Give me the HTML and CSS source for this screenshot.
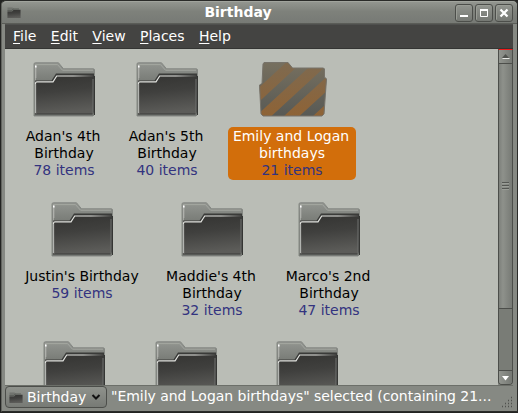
FILE: index.html
```html
<!DOCTYPE html>
<html lang="en">
<head>
<meta charset="utf-8">
<title>Birthday</title>
<link rel="stylesheet" href="styles.css">
</head>
<body>
<svg class="defs" width="0" height="0" aria-hidden="true">
  <defs>
    <linearGradient id="back" x1="0" y1="0" x2="0" y2="1"><stop offset="0" stop-color="#929590"/><stop offset=".5" stop-color="#6d706b"/></linearGradient>
    <linearGradient id="front" x1="0" y1="0" x2=".15" y2="1"><stop offset="0" stop-color="#343432"/><stop offset=".45" stop-color="#40403e"/><stop offset="1" stop-color="#5c5c59"/></linearGradient>
    <linearGradient id="shine" x1="0" y1="0" x2="1" y2="0"><stop offset="0" stop-color="#dedfdb"/><stop offset=".65" stop-color="#e6e7e3"/><stop offset="1" stop-color="#4a4a48"/></linearGradient>
    <linearGradient id="fade" x1="0" y1="0" x2="0" y2="1"><stop offset="0" stop-color="#77705f"/><stop offset="1" stop-color="#575955"/></linearGradient>
    <linearGradient id="stripe" gradientUnits="userSpaceOnUse" x1="0" y1="0" x2="0" y2="54"><stop offset="0" stop-color="#7e6a50"/><stop offset="1" stop-color="#8e6336"/></linearGradient>
    <clipPath id="open"><path d="M4 2 5 .5H29L33.500 6H64.500L65.500 7V15L67.500 17 65 52 63 54H4L2 52 .5 23 3 21.500Z"/></clipPath>
    <symbol id="folder" viewBox="0 0 63 55">
      <path d="M1 54V2Q1 .8 2.500 .8H25.500L30.500 6.800H60Q61.500 6.800 61.500 8V52L60 54Z" fill="url(#back)" stroke="#858883"/>
      <path d="M2.500 20V2.600H24.500L29.500 8.200H60" fill="none" stroke="#a4a7a1"/>
      <path d="M2.800 5V16" stroke="#b4b6b1"/>
      <rect x="2" y="3.500" width="1.600" height="2" fill="#fff"/>
      <path d="M2 20V18.500H18.500L23 11.500H61V50L59 53H2Z" fill="#3a3b39"/>
      <path d="M2 52V21Q2 20 3.200 20H20L24 14H60V52Z" fill="url(#front)"/>
      <path d="M2.500 51V21Q2.500 19.800 4 19.800H20L23.700 14H60" fill="none" stroke="url(#shine)" stroke-width="1.200"/>
      <path d="M2.500 22V51" fill="none" stroke="#b2b4b0"/>
      <path d="M60 17V51" stroke="#6f716e"/>
      <path d="M61.500 14V53" stroke="#353634"/>
      <path d="M1.500 53.200H60.500" stroke="#777a76" stroke-width="1.500"/>
      <path d="M4 51.500H59" stroke="#4b4b49"/>
    </symbol>
    <symbol id="mini" viewBox="0 0 14 13">
      <path d="M.5 12V1.500H5.500L7 3H13.500V12Z" fill="#70736e"/>
      <path d="M.5 5.500H5L6.500 4H13.500V12H.5Z" fill="url(#front)"/>
      <path d="M.5 4.500H5L6 3H12" fill="none" stroke="#5b5e59"/>
    </symbol>
  </defs>
</svg>
<div class="window">
  <header class="titlebar">
    <svg class="app-icon" width="14" height="13"><use href="#mini"/></svg>
    <h1 class="title">Birthday</h1>
    <div class="controls">
      <span class="control"><svg width="16" height="16"><path d="M4 11H12" stroke="#fff" stroke-width="2"/></svg></span>
      <span class="control"><svg width="16" height="16"><path d="M4.500 4V11.500H11.500V4" fill="none" stroke="#fff"/><path d="M4 5H12" stroke="#fff" stroke-width="2"/></svg></span>
      <span class="control"><svg width="16" height="16"><path d="M4.500 4.500 11.500 11.500M11.500 4.500 4.500 11.500" stroke="#fff" stroke-width="2.300"/></svg></span>
    </div>
  </header>
  <nav class="menubar">
    <span><u>F</u>ile</span><span><u>E</u>dit</span><span><u>V</u>iew</span><span><u>P</u>laces</span><span><u>H</u>elp</span>
  </nav>
  <div class="content">
    <main class="files">
      <div class="row row-one">
        <div class="item"><svg class="icon"><use href="#folder"/></svg><div class="label"><span class="first">Adan's 4th</span>Birthday<small>78 items</small></div></div>
        <div class="item"><svg class="icon"><use href="#folder"/></svg><div class="label"><span class="first">Adan's 5th</span>Birthday<small>40 items</small></div></div>
        <div class="item selected">
          <svg class="icon" viewBox="0 0 68 55"><g clip-path="url(#open)"><path d="M0 0H68V55H0Z" fill="url(#fade)"/><path d="M-33 63 43 -7M-5 63 71 -7M23 63 99 -7M52 63 128 -7" stroke="url(#stripe)" stroke-width="10.500"/></g><path d="M4 2 5 .5H29L33.500 6H64.500L65.500 7V15L67.500 17 65 52 63 54H4L2 52 .5 23 3 21.500Z" fill="none" stroke="#77736a"/></svg>
          <div class="label"><span class="first">Emily and Logan</span>birthdays<small>21 items</small></div>
        </div>
      </div>
      <div class="row row-two">
        <div class="item"><svg class="icon"><use href="#folder"/></svg><div class="label">Justin's Birthday<small>59 items</small></div></div>
        <div class="item"><svg class="icon"><use href="#folder"/></svg><div class="label"><span class="first">Maddie's 4th</span>Birthday<small>32 items</small></div></div>
        <div class="item"><svg class="icon"><use href="#folder"/></svg><div class="label"><span class="first">Marco's 2nd</span>Birthday<small>47 items</small></div></div>
      </div>
      <div class="row row-three">
        <div class="item"><svg class="icon"><use href="#folder"/></svg></div>
        <div class="item"><svg class="icon"><use href="#folder"/></svg></div>
        <div class="item"><svg class="icon"><use href="#folder"/></svg></div>
      </div>
    </main>
    <aside class="scrollbar">
      <div class="arrow up"><svg width="13" height="13"><path d="M3 8 6.500 4 10 8Z" fill="#50524e"/><path d="M3.500 8.500H10.500" stroke="#e8e9e6"/></svg></div>
      <div class="thumb"><i></i><i></i><i></i></div>
      <div class="trough"></div>
      <div class="arrow down"><svg width="13" height="14"><path d="M3 5H10L6.500 9.500Z" fill="#fff"/></svg></div>
    </aside>
  </div>
  <footer class="statusbar">
    <div class="path"><svg width="14" height="13"><use href="#mini"/></svg><span>Birthday</span><svg width="10" height="8"><path d="M1.500 2 5 5.500 8.500 2" fill="none" stroke="#111" stroke-width="2"/></svg></div>
    <div class="status">"Emily and Logan birthdays" selected (containing 21...</div>
    <svg class="grip" width="12" height="12"><path d="M10 1.500H11M7 4.500H8M10 4.500H11M4 7.500H5M7 7.500H8M10 7.500H11M1 10.500H2M4 10.500H5M7 10.500H8M10 10.500H11" stroke="#50524e" stroke-width="1.300"/></svg>
  </footer>
</div>
</body>
</html>
```
FILE: styles.css
```css
* { box-sizing: border-box; }
body { margin: 0; background: #222321; font: 14px/17px "DejaVu Sans", sans-serif; overflow: hidden; }
svg { display: block; flex: none; }
.defs { height: 0; }
.window {
  width: 517px; height: 412px; margin-left: 1px; padding: 0 4px 3px 3px;
  display: flex; flex-direction: column;
  background: #868983; border: 1px solid #2a2b29; border-left-color: #62645f;
  border-radius: 5px 5px 0 0;
}
.titlebar {
  height: 23px; flex: none; margin: 0 -4px 0 -3px; padding: 0 4px 0 5px;
  display: flex; align-items: center;
  background: linear-gradient(#92958f, #7e817b 45%, #777a75);
  border-top: 1px solid #a1a49d; border-bottom: 1px solid #5a5c57;
  border-radius: 5px 5px 0 0;
}
.app-icon { margin-bottom: 1px; }
.title { flex: 1; margin: 0; text-align: center; font-size: 14px; line-height: 17px; color: #fff; }
.controls { display: flex; gap: 2px; }
.control { width: 18px; height: 18px; border: 1px solid #4c4e4a; border-radius: 3px; background: linear-gradient(#92958f, #757873); box-shadow: inset 1px 1px #999c95; }
.menubar {
  height: 25px; flex: none; padding: 3px 8px 0; display: flex; gap: 14.4px;
  background: #444442; border-top: 1px solid #4f504e; border-bottom: 1px solid #343533; color: #fff;
}
.menubar u { text-underline-offset: 2px; text-decoration-thickness: 1px; }
.content { height: 336px; flex: none; display: flex; }
.files { flex: 1; overflow: hidden; background: #babdb6; padding-top: 13px; }
.row { display: grid; height: 140px; }
.row-one { grid-template-columns: 104px 102px 148px; padding-left: 7px; }
.row-two { grid-template-columns: 124px 136px 98px; padding-left: 15px; }
.row-three { grid-template-columns: 110px 114px 128px; padding-left: 14px; }
.row-three { margin-top: -1px; }
.item { display: flex; flex-direction: column; align-items: center; gap: 10px; }
.icon { width: 63px; height: 55px; }
.selected .icon { width: 68px; margin-left: 2px; }
.label { padding: 1px 4px; border-radius: 5px; text-align: center; white-space: nowrap; color: #000; }
.label .first { display: block; margin: 0 1px 0 -1px; }
.label small { display: block; font-size: 14px; color: #33337f; }
.selected .label { width: 128px; background: #d26e0b; color: #fff; }
.scrollbar { width: 15px; display: flex; flex-direction: column; background: #797c76; border: 1px solid #4c4e4a; border-top-color: #ef1b1b; border-radius: 0 0 4px 4px; }
.arrow { background: linear-gradient(90deg, #92958f, #757873); }
.up { height: 14px; border-bottom: 1px solid #4c4e4a; }
.thumb { height: 245px; display: flex; flex-direction: column; align-items: center; justify-content: center; gap: 1px; background: linear-gradient(90deg, #7d807b, #8e918b 30%, #777a75); border-bottom: 1px solid #4c4e4a; }
.thumb i { width: 7px; height: 2px; border-top: 1px solid #555753; border-bottom: 1px solid #9a9d97; }
.trough { flex: 1; }
.down { height: 14px; border-top: 1px solid #4c4e4a; border-radius: 0 0 3px 3px; }
.statusbar { height: 23px; flex: none; display: flex; align-items: flex-start; background: #868983; border-top: 1px solid #6c6f69; color: #fff; }
.path { width: 102px; height: 22px; display: flex; align-items: center; padding-left: 3px; border: 1px solid #4c4e4a; border-radius: 4px; background: linear-gradient(#8f928c, #777a75); }
.path span { width: 62px; margin: 0 2px 0 4px; }
.status { flex: 1; padding: 2px 0 0 4px; white-space: nowrap; letter-spacing: -.035px; }
.grip { margin-top: 10px; }
```
